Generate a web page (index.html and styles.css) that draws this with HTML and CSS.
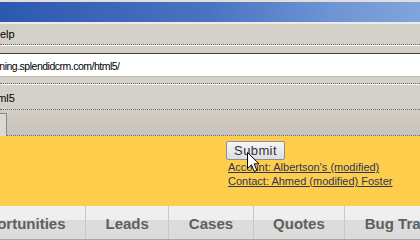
FILE: index.html
```html
<!DOCTYPE html>
<html lang="en">
<head>
    <meta charset="UTF-8">
    <title>SplendidCRM HTML5</title>
    <link rel="stylesheet" href="styles.css">
</head>
<body>

<div class="titlebar"></div>

<div class="menubar">
    <span class="menu-item">Help</span>
</div>

<div class="addressbar">
    <div class="address">http://training.splendidcrm.com/html5/</div>
</div>

<div class="linksbar">
    <span class="link-item">html5</span>
</div>

<div class="toolstrip">
    <div class="tool-tab"></div>
</div>

<div class="content">
    <button class="submit-btn">Submit</button>
    <div class="results">
        <a href="#">Account: Albertson's (modified)</a>
        <a href="#">Contact: Ahmed (modified) Foster</a>
    </div>
    <!-- mouse pointer over the button -->
    <svg class="pointer" width="13" height="21" viewBox="0 0 13 21">
        <path d="M0.5 0.5 L0.5 16.5 L4.5 12.8 L7.2 19.5 L9.8 18.4 L7.2 11.8 L12 11.8 Z" fill="#fff" stroke="#000" stroke-width="1"/>
    </svg>
</div>

<div class="tabs">
    <div class="tab first"><span>Opportunities</span></div>
    <div class="tab">Leads</div>
    <div class="tab">Cases</div>
    <div class="tab">Quotes</div>
    <div class="tab">Bug Tracker</div>
</div>

</body>
</html>
```

FILE: styles.css
```css
/* old XP style browser chrome */
body {
    margin: 0;
    width: 420px;
    height: 240px;
    overflow: hidden;
    background: #d4d0c8;
    font-family: 'Liberation Sans', Arial, sans-serif;
    color: #000;
}

.titlebar {
    height: 20px;
    border-top: 2px solid #e2dfd8;
    border-bottom: 2px solid #eeece6;
    background: linear-gradient(to right, #2c58b0, #4a74c2 50%, #6f95d4 80%, #80a4dc);
}

.menubar {
    height: 20px;
    line-height: 21px;
    font-size: 11px;
    border-bottom: 1px dotted #6a6a6a;
    overflow: hidden;
    white-space: nowrap;
}

.menu-item {
    display: inline-block;
    margin-left: -8px;
}

.addressbar {
    border-top: 1px solid #f4f2ee;
    padding: 7px 0 6px;
    border-bottom: 1px dotted #6a6a6a;
}

.address {
    height: 22px;
    line-height: 25px;
    background: #fff;
    border-top: 1px solid #404040;
    border-bottom: 1px solid #c4c0b8;
    font-size: 10.5px;
    letter-spacing: -0.5px;
    white-space: nowrap;
    overflow: hidden;
    text-indent: -36px;
}

.linksbar {
    border-top: 1px solid #f4f2ee;
    height: 24px;
    line-height: 26px;
    font-size: 11px;
    border-bottom: 1px dotted #6a6a6a;
    overflow: hidden;
    white-space: nowrap;
}

.link-item {
    display: inline-block;
    margin-left: -12px;
}

.toolstrip {
    height: 26px;
    box-sizing: border-box;
    padding-top: 3px;
    background: linear-gradient(#d2cec6, #c6c2ba);
    border-bottom: 1px dotted #6a6a6a;
}

.tool-tab {
    width: 7px;
    height: 23px;
    background: #dcd9d2;
    border: 1px solid #8c8a86;
    border-left: none;
    border-bottom: none;
    box-sizing: border-box;
}

.content {
    position: relative;
    height: 70px;
    background: #ffcd4c;
    padding: 5px 0 0 226px;
    box-sizing: border-box;
}

.submit-btn {
    display: block;
    width: 59px;
    height: 19px;
    padding: 0;
    font-family: 'Liberation Sans', Arial, sans-serif;
    font-size: 13px;
    letter-spacing: 0.4px;
    color: #333;
    border: 1px solid #8e8e98;
    border-radius: 2px;
    background: linear-gradient(#f6f6f8, #dcdce4);
}

.results {
    display: flex;
    flex-direction: column;
    padding-left: 2px;
    font-size: 11px;
    line-height: 14px;
}

.results a {
    color: #2c3658;
    text-decoration: underline;
}

.pointer {
    position: absolute;
    left: 247px;
    top: 16px;
}

.tabs {
    display: flex;
    height: 33px;
    background: linear-gradient(#efefef 0, #efefef 14px, #dcdcdc 14px);
    border-bottom: 1px solid #a6a6a6;
    white-space: nowrap;
}

.tab {
    flex: none;
    padding: 0 19.5px;
    line-height: 35px;
    font-size: 15px;
    font-weight: bold;
    color: #5a6358;
    border-right: 1px solid #c8c8c8;
}

.tab.first {
    width: 46px;
    display: flex;
    justify-content: flex-end;
    overflow: hidden;
}
```
